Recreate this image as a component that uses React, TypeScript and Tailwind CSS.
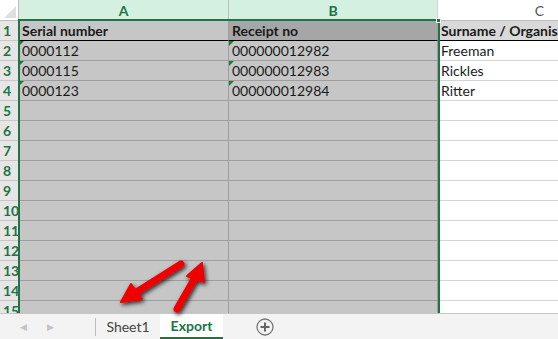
import React from 'react';

const rows = [
  { a: 'Serial number', b: 'Receipt no', c: 'Surname / Organisation' },
  { a: '0000112', b: '000000012982', c: 'Freeman' },
  { a: '0000115', b: '000000012983', c: 'Rickles' },
  { a: '0000123', b: '000000012984', c: 'Ritter' },
  ...Array.from({ length: 11 }, () => ({ a: '', b: '', c: '' })),
];

const Flag = () => (
  <span className="absolute left-0 top-0 w-0 h-0 border-t-[5px] border-t-[#1e7b34] border-r-[5px] border-r-transparent" />
);

const App: React.FC = () => {
  return (
    <div
      className="relative w-[558px] h-[339px] overflow-hidden bg-white flex flex-col"
      style={{ fontFamily: 'Lato, "Liberation Sans", sans-serif' }}
    >
      {/* Grid */}
      <div className="relative flex-1 overflow-hidden">
        {/* Column headers */}
        <div className="flex h-[21px] border-b border-[#bdbdbd]">
          <div className="w-[19px] shrink-0 relative bg-white border-r border-[#bdbdbd]">
            <span className="absolute right-[2px] bottom-[2px] w-0 h-0 border-l-[12px] border-l-transparent border-b-[12px] border-b-[#dfdfdf]" />
          </div>
          <div className="w-[210px] shrink-0 bg-[#d3f0e0] border-r border-[#bdbdbd] flex items-center justify-center text-[14px] font-bold text-[#217346]">
            A
          </div>
          <div className="w-[209px] shrink-0 bg-[#d3f0e0] border-r border-[#d4d4d4] flex items-center justify-center text-[14px] font-bold text-[#217346]">
            B
          </div>
          <div className="flex-1 flex items-center justify-end pr-[14px] text-[14px] text-[#555]">C</div>
        </div>

        {rows.map((r, i) => (
          <div key={i} className="flex h-[20px]">
            <div className="w-[19px] shrink-0 bg-[#e6e6e6] border-r border-b border-[#c8c8c8] flex items-center pl-[3px] pt-[1px] text-[14px] font-bold text-[#217346] leading-none">
              {i + 1}
            </div>
            <div
              className={`relative w-[210px] shrink-0 border-r flex items-center pl-[3px] text-[14px] text-[#1a1a1a] whitespace-nowrap overflow-hidden ${
                i === 0 ? 'bg-[#c6c6c6] font-bold border-b border-b-black border-r-[#9e9e9e]' : 'bg-[#c6c6c6] border-b border-[#9e9e9e]'
              }`}
            >
              {i > 0 && i < 4 && <Flag />}
              {r.a}
            </div>
            <div
              className={`relative w-[209px] shrink-0 border-r flex items-center pl-[3px] text-[14px] text-[#1a1a1a] whitespace-nowrap overflow-hidden ${
                i === 0 ? 'bg-[#a6a6a6] font-bold border-b border-b-black border-r-[#9e9e9e]' : 'bg-[#c6c6c6] border-b border-[#9e9e9e]'
              }`}
            >
              {i > 0 && i < 4 && <Flag />}
              {r.b}
            </div>
            <div
              className={`flex-1 flex items-center pl-[3px] text-[14px] text-[#1a1a1a] whitespace-nowrap overflow-hidden ${
                i === 0 ? 'bg-[#d9d9d9] font-bold border-b border-black' : 'bg-white border-b border-[#d4d4d4]'
              }`}
            >
              {r.c}
            </div>
          </div>
        ))}

        {/* Selection border A:B (continues past the visible rows) */}
        <div className="absolute left-[18px] top-[19px] w-[422px] h-[340px] border-2 border-[#217346] pointer-events-none" />
        <div className="absolute left-[436px] top-[18px] w-[5px] h-[5px] bg-[#217346] border border-white pointer-events-none" />
      </div>

      {/* Sheet tabs */}
      <div className="h-[26px] shrink-0 bg-[#f3f3f3] border-t border-[#c6c6c6] flex items-center text-[14px]">
        <div className="w-[95px] flex items-center gap-[20px] pl-[20px] text-[#c3c3c3] text-[9px]">
          <span>◀</span>
          <span>▶</span>
        </div>
        <div className="w-px h-[18px] bg-[#bdbdbd]" />
        <div className="w-[64px] text-center text-[#444]">Sheet1</div>
        <div className="h-full w-[63px] bg-white border-b-2 border-[#217346] flex items-center justify-center font-bold text-[#217346]">
          Export
        </div>
        <div className="ml-[33px]">
          <svg width="18" height="18" viewBox="0 0 18 18">
            <circle cx="9" cy="9" r="8" fill="none" stroke="#777" strokeWidth="1.3" />
            <path d="M9 4.5v9M4.5 9h9" stroke="#666" strokeWidth="2" />
          </svg>
        </div>
      </div>

      {/* Annotation arrows */}
      <svg className="absolute left-0 top-0 pointer-events-none" width="558" height="339" viewBox="0 0 558 339">
        <defs>
          <filter id="sh" x="-30%" y="-30%" width="160%" height="160%">
            <feDropShadow dx="1.5" dy="2" stdDeviation="2" floodColor="#000" floodOpacity="0.8" />
          </filter>
        </defs>
        <g filter="url(#sh)" fill="#ee0000" stroke="#ee0000" strokeLinecap="round" strokeLinejoin="round">
          <line x1="181" y1="264" x2="135" y2="293" strokeWidth="7" />
          <polygon points="121,302 131,284 142,299" strokeWidth="2" />
          <line x1="177" y1="309" x2="196" y2="276" strokeWidth="7" />
          <polygon points="202,263 187,276 204,282" strokeWidth="2" />
        </g>
      </svg>
    </div>
  );
};

export default App;
